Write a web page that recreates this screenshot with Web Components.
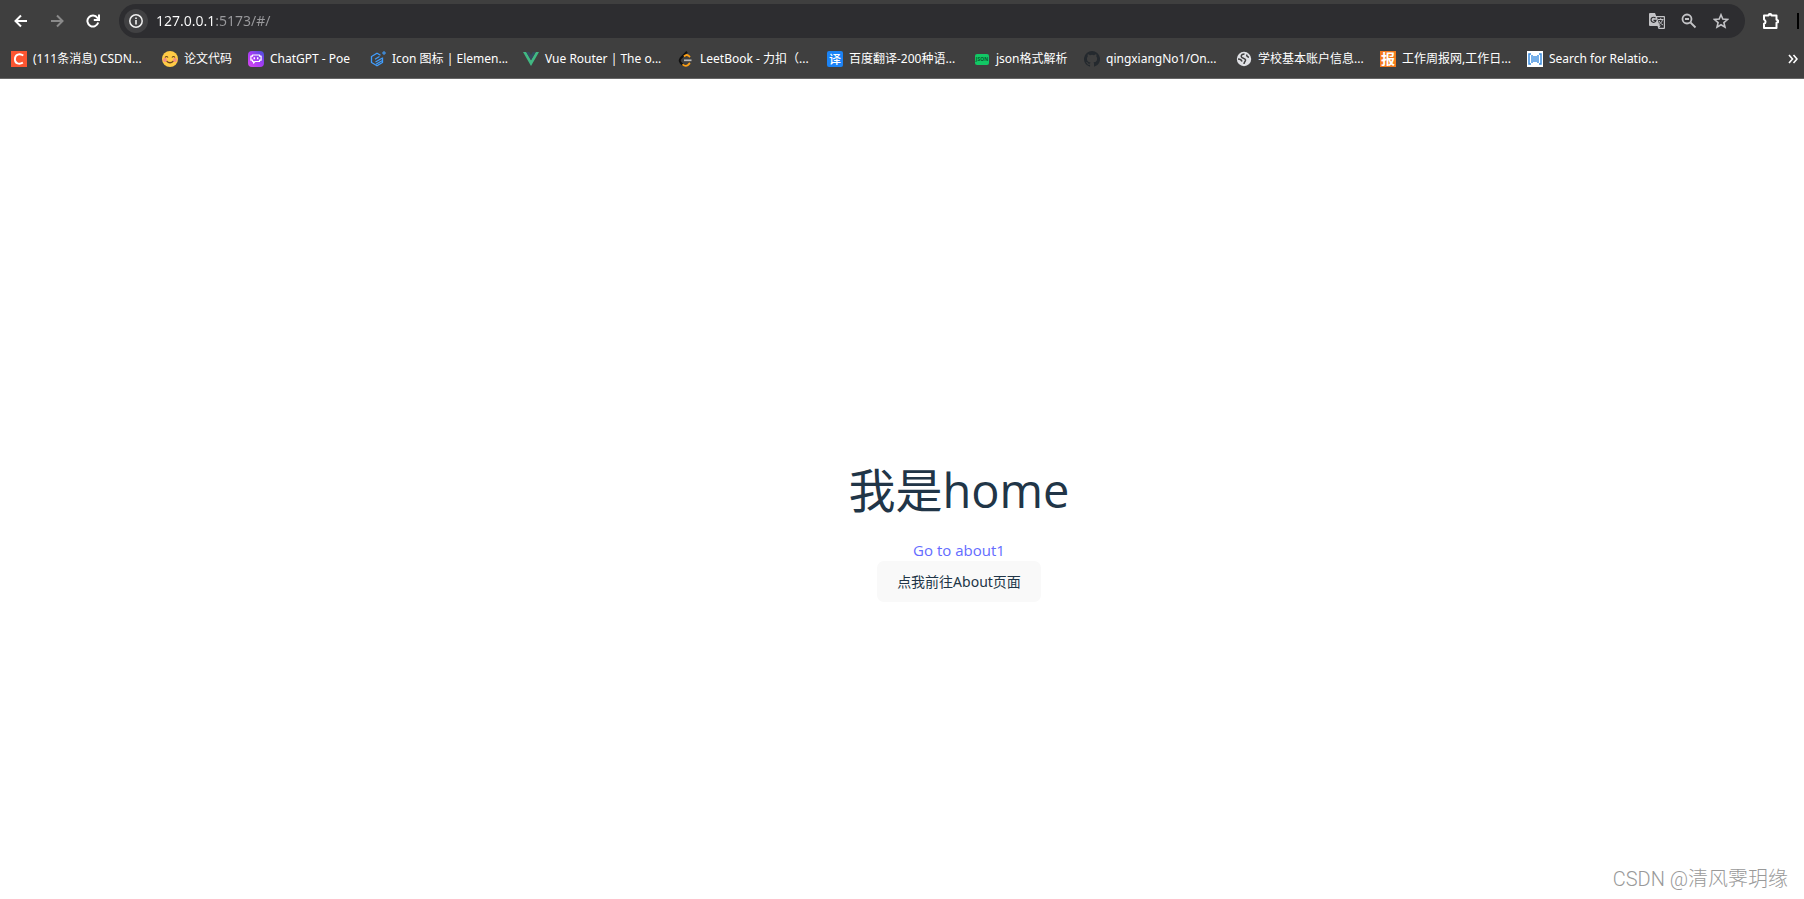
<!DOCTYPE html>
<html lang="zh-CN">
<head>
<meta charset="utf-8">
<title>127.0.0.1:5173/#/</title>
<style>
html, body { height: 100%; margin: 0; }
body { background: #fff; font-family: "Open Sans", "Noto Sans CJK SC", sans-serif; }
</style>
</head>
<body>
<browser-window>
  <browser-toolbar slot="chrome"></browser-toolbar>
  <bookmark-bar slot="chrome"></bookmark-bar>
  <home-view></home-view>
  <page-watermark slot="mark">CSDN @清风霁玥缘</page-watermark>
</browser-window>

<script>
const define = (name, html, setup) => customElements.define(name, class extends HTMLElement {
  connectedCallback() {
    if (this.shadowRoot) return;
    const root = this.attachShadow({ mode: 'open' });
    root.innerHTML = html;
    if (setup) setup(this, root);
  }
});

define('browser-window', `
<style>
:host { display: flex; flex-direction: column; min-height: 100vh; position: relative; }
header { background: #3f3f3f; border-bottom: 1px solid #666; }
main { flex: 1; display: flex; }
::slotted(home-view) { flex: 1; }
</style>
<header><slot name="chrome"></slot></header>
<main><slot></slot></main>
<slot name="mark"></slot>`);

define('browser-toolbar', `
<style>
:host { display: flex; align-items: center; padding: 4px 5px 0 9px; color: #fff; }
button { border: 0; padding: 0; background: none; color: inherit; width: 24px; height: 24px; display: grid; place-items: center; flex: none; }
nav { display: flex; gap: 12px; margin-right: 14px; }
svg { display: block; fill: none; stroke: currentColor; stroke-width: 2; }
.off { color: #8a8a8a; }
form { flex: 1; display: flex; align-items: center; height: 34px; margin: 0; border-radius: 17px; background: #2d2d30; padding: 0 12px 0 5px; color: #c3c3c6; }
.info { border-radius: 12px; background: #414143; color: #f0f0f0; }
input { flex: 1; min-width: 0; height: 24px; border: 0; padding: 0; margin-left: 8px; outline: 0; font: 14px/24px "Noto Sans", sans-serif;
  background: linear-gradient(90deg, #fff 59px, #9a9a9d 59px); -webkit-background-clip: text; background-clip: text; color: transparent; }
.tools { display: flex; gap: 8px; }
.ext { margin-left: 14px; }
.edge { width: 2px; height: 16px; background: #000; margin-left: 14px; }
</style>
<nav>
<button aria-label="Back"><svg width="14" height="14" viewBox="0 0 14 14"><path d="M13 7H2M7 1.5 1.5 7 7 12.5"/></svg></button>
<button class="off" aria-label="Forward"><svg width="14" height="14" viewBox="0 0 14 14"><path d="M1 7h11M7 1.500 12.500 7 7 12.500"/></svg></button>
<button aria-label="Reload"><svg width="14" height="14" viewBox="0 0 14 14"><path d="M12.200 8.500A5.500 5.500 0 1 1 11.400 3.800L12.500 5"/><path d="M13 .5V6H7.800"/></svg></button>
</nav>
<form>
<button type="button" class="info" aria-label="Site information"><svg width="14" height="14" viewBox="0 0 14 14"><circle cx="7" cy="7" r="6.200" stroke-width="1.500"/><path d="M7 6v4.500M7 3.500v1.600" stroke-width="1.600"/></svg></button>
<input aria-label="Address" value="127.0.0.1:5173/#/" spellcheck="false">
<span class="tools">
<button type="button" aria-label="Translate"><svg width="18" height="18" viewBox="0 0 18 18"><path d="M2 1h5l1.200 3H16a1 1 0 0 1 1 1v11a1 1 0 0 1-1 1h-5.500l-1-3H2a1 1 0 0 1-1-1V2a1 1 0 0 1 1-1z" fill="currentColor" stroke="none"/><path d="M9 5.200h6.800v10.600h-4.600l1.600-2.300H11.500z" fill="#2d2d30" stroke="none"/><path d="M7.500 6.200A2.500 2.500 0 1 0 8 8.300H5.500" stroke="#2d2d30" stroke-width="1.200"/><path d="M10 7.500h5.500M12.700 6.200v1.300M14.500 7.500c-.5 2.500-2 4-3.500 5M11 8.800c1 2 2 3 4 4.200" stroke-width="1"/></svg></button>
<button type="button" aria-label="Zoom"><svg width="16" height="16" viewBox="0 0 16 16"><circle cx="6" cy="6" r="4.500" stroke-width="1.800"/><path d="m9.500 9.500 5 5M4 6h4" stroke-width="1.800"/></svg></button>
<button type="button" aria-label="Bookmark"><svg width="16" height="16" viewBox="0 0 16 16"><path d="m8 1.800 1.800 4.300 4.700.4-3.600 3.100 1.100 4.600L8 11.800l-4 2.400 1.100-4.600L1.500 6.500l4.700-.4z" stroke-width="1.600"/></svg></button>
</span>
</form>
<button class="ext" aria-label="Extensions"><svg width="18" height="18" viewBox="0 0 18 18"><path d="M2 3.500h4.500a1.500 1.500 0 0 1 3 0h5v4.300a1.500 1.500 0 0 1 0 3v5.200H2v-4.200a2.200 2.200 0 0 0 0-4.200z" stroke-linejoin="round"/><path d="M6.800 2.500h2.400M15.800 8v2.700"/></svg></button>
<span class="edge"></span>`);

const icons = {
  csdn: '<path fill="#fc5531" d="M0 0h16v16H0z"/><path d="M12.300 4.600C8.500 1.900 4 3.500 3.900 8.200c0 4.600 4.300 5.500 8 3.500" fill="none" stroke="#fff" stroke-width="1.900"/>',
  smile: '<circle cx="8" cy="8" r="8" fill="#ffcb45"/><path d="M3 6.500q1.500-2 3 0M10 6.500q1.500-2 3 0M4.500 10q3.500 3.500 7 0" fill="none" stroke="#6b4420" stroke-width="1.200"/><circle cx="3" cy="9" r="1.900" fill="#f68b83"/><circle cx="13" cy="9" r="1.900" fill="#f68b83"/>',
  poe: '<defs><linearGradient id="g" x1="0" y1="1" x2="1" y2="0"><stop stop-color="#d946ef"/><stop offset=".5" stop-color="#a53cf5"/><stop offset="1" stop-color="#4350d8"/></linearGradient></defs><rect width="16" height="16" rx="4" fill="url(#g)"/><path d="M4.500 4h7v1.200h1.600v4h-1.600v1.300H7L5.500 12v-1.500h-1V9.200H2.900v-4h1.600z" fill="none" stroke="#fff" stroke-width="1.200" stroke-linejoin="round"/><path d="M6.300 6.200v2M9.700 6.200v2" stroke="#fff" stroke-width="1.500"/>',
  element: '<path d="M12.500 6.500v5L7 14.800l-5.500-3.300v-6L7 2.200l3.500 2" fill="none" stroke="#409eff" stroke-width="1.300"/><path d="M5 8.200 9.500 5.500M5.500 11l6.500-3.800M6 13.300l6-3.500" stroke="#409eff" stroke-width="1.200"/><path d="M12 2h4M14 0v4" stroke="#409eff"/>',
  vue: '<path fill="#41b883" d="M0 1h3.200L8 9.300 12.800 1H16L8 15z"/><path fill="#35495e" d="M3.200 1h3L8 4.200 9.800 1h3L8 9.300z"/>',
  leet: '<path d="M9 .8 2.500 7.500q-1.500 2 0 4L5 14" fill="none" stroke="#111" stroke-width="2"/><path d="M6 5.500q2.500-2.500 4.500-.8L12 6.200M4.500 13.300q3 2.700 5.500.7l2-2" fill="none" stroke="#ffa116" stroke-width="1.800"/><path d="M6 9.300h7.500" stroke="#bbb" stroke-width="1.700"/>',
  fanyi: '<rect width="16" height="16" rx="2" fill="#1b83f5"/><text x="8" y="12.500" text-anchor="middle" font-size="12" font-weight="500" fill="#fff">译</text>',
  json: '<rect x="1" y="3" width="14" height="11" rx="2" fill="#12c865"/><text x="8" y="10" text-anchor="middle" font-size="5" font-weight="700" fill="#075b2e">JSON</text>',
  github: '<path fill="#24292e" d="M8 0a8 8 0 0 0-2.530 15.590c.4.070.55-.17.550-.38v-1.490c-2.010.37-2.530-.49-2.690-.94-.09-.23-.48-.94-.82-1.130-.28-.15-.68-.52-.01-.53.630-.01 1.080.58 1.230.82.720 1.210 1.870.87 2.330.66.070-.52.280-.87.510-1.070-1.780-.2-3.640-.89-3.640-3.950 0-.87.310-1.590.820-2.150-.08-.2-.36-1.020.08-2.120 0 0 .67-.21 2.200.82a7.400 7.400 0 0 1 4 0c1.530-1.040 2.200-.82 2.200-.82.440 1.100.160 1.920.080 2.120.510.56.820 1.270.820 2.150 0 3.070-1.870 3.750-3.650 3.950.290.25.540.73.540 1.480v2.200c0 .21.150.46.550.38A8 8 0 0 0 8 0z"/>',
  globe: '<circle cx="8" cy="8" r="7.200" fill="#e0e1e5"/><path d="M8.500 3C6.500 3 5 4 5.300 5.700S9 7 9.500 8.700 8 10.500 8 13M11 3.500c-.8 1.500.5 2.500 2 2.700M2 8c1.500 0 3.500.7 4 2.500" fill="none" stroke="#3f3f3f" stroke-width="1.500"/>',
  bao: '<path fill="#f47a1c" d="M0 0h16v16H0z"/><text x="8" y="13" text-anchor="middle" font-size="14" font-weight="700" fill="#fff">报</text>',
  search: '<path fill="#fff" d="M0 0h16v16H0z"/><path d="M4 3H2v10h2M12 3h2v10h-2" fill="none" stroke="#3b8de0" stroke-width="1.500"/><path d="M5 4v8M7 5v6M9 5v6M11 4v8" stroke="#3b8de0" stroke-width="1.400"/>'
};

/* One bookmark: favicon plus a label that ends in an ellipsis. */
define('bookmark-item', `
<style>
:host { display: block; flex: none; }
a { display: flex; align-items: center; gap: 6px; color: #fff; text-decoration: none; font: 12px/20px "Noto Sans", "Noto Sans CJK SC", sans-serif; white-space: nowrap; }
svg { width: 16px; height: 16px; flex: none; }
</style>
<a href="#"><svg viewBox="0 0 16 16" aria-hidden="true"></svg><slot></slot></a>`,
(host, root) => {
  root.querySelector('svg').innerHTML = icons[host.getAttribute('icon')];
});

define('bookmark-bar', `
<style>
:host { display: flex; align-items: center; height: 38px; padding: 2px 5px 0 11px; color: #fff; }
nav { flex: 1; display: flex; min-width: 0; }
button { border: 0; background: none; padding: 0; width: 12px; height: 20px; color: inherit; display: grid; place-items: center; }
</style>
<nav></nav>
<button aria-label="More bookmarks"><svg width="10" height="10" viewBox="0 0 10 10" fill="none" stroke="#fff" stroke-width="1.600"><path d="m1 1 3.500 4L1 9M5.500 1 9 5 5.500 9"/></svg></button>`,
(host, root) => {
  const items = [
    ['csdn', 151, '(111条消息) CSDN...'], ['smile', 86, '论文代码'], ['poe', 122, 'ChatGPT - Poe'],
    ['element', 153, 'Icon 图标 | Elemen...'], ['vue', 155, 'Vue Router | The o...'], ['leet', 149, 'LeetBook - 力扣（...'],
    ['fanyi', 147, '百度翻译-200种语...'], ['json', 110, 'json格式解析'], ['github', 152, 'qingxiangNo1/On...'],
    ['globe', 144, '学校基本账户信息...'], ['bao', 147, '工作周报网,工作日...'], ['search', 151, 'Search for Relatio...']
  ];
  const nav = root.querySelector('nav');
  for (const [icon, width, label] of items) {
    const el = document.createElement('bookmark-item');
    el.setAttribute('icon', icon);
    el.style.width = width + 'px';
    el.textContent = label;
    nav.append(el);
  }
});

define('home-view', `
<style>
:host { display: flex; flex-direction: column; align-items: center; justify-content: center; padding: 88px 0 0 114px; color: #213547; }
h1 { margin: 0 0 24px; font-size: 47px; line-height: 50px; font-weight: 400; }
a { color: #646cff; text-decoration: none; font-size: 15px; line-height: 22px; font-weight: 400; }
button { border: 0; border-radius: 7px; background: #f9f9f9; color: inherit; font: 14px/21px "Noto Sans", "Noto Sans CJK SC", sans-serif; padding: 10px 20px; }
</style>
<h1>我是home</h1>
<a href="#/about">Go to about1</a>
<button>点我前往About页面</button>`);

define('page-watermark', `
<style>
:host { position: absolute; right: 16px; bottom: 8px; font: 20px/24px Roboto, "Noto Sans CJK SC", sans-serif; font-weight: 300; color: #999; }
</style>
<slot></slot>`);
</script>
</body>
</html>
